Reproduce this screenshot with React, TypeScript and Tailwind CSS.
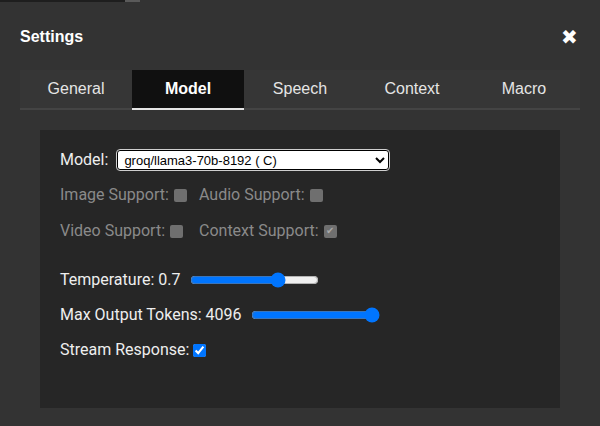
import { useState } from 'react'

const tabs = ['General', 'Model', 'Speech', 'Context', 'Macro']

export default function App() {
  const [active, setActive] = useState('Model')
  const [temp, setTemp] = useState(0.7)
  const [tokens, setTokens] = useState(4096)
  const [stream, setStream] = useState(true)

  return (
    <div className="h-[426px] w-[600px] overflow-hidden bg-[#333333] font-['Roboto',sans-serif] text-[#eeeeee]">
      {/* strip of the page behind the dialog */}
      <div className="flex h-[2px]">
        <div className="w-[125px] bg-[#1e1e1e]" />
        <div className="w-[15px] bg-[#5a5a5a]" />
      </div>

      <div className="px-5">
        {/* Header */}
        <div className="flex h-[69px] items-center justify-between">
          <h2 className="font-['Liberation_Sans',Arial,sans-serif] text-base font-bold text-white">Settings</h2>
          <button type="button" className="mr-[2px] text-[20px] leading-none text-white">
            ✖
          </button>
        </div>

        {/* Tabs */}
        <div className="-mt-px flex h-10 border-b-2 border-[#444444] bg-[#363636] font-['Liberation_Sans',Arial,sans-serif]">
          {tabs.map((t) => (
            <button
              key={t}
              type="button"
              onClick={() => setActive(t)}
              className={
                t === active
                  ? 'flex-1 -mb-[2px] border-b-2 border-[#e5e5e5] bg-[#101010] text-base font-bold text-white'
                  : 'flex-1 text-base text-[#e5e5e5]'
              }
            >
              {t}
            </button>
          ))}
        </div>

        {/* Model panel */}
        <div className="mx-5 mt-5 h-[278px] bg-[#262626] px-5 pt-5 text-base">
          <div className="flex h-5 items-center">
            <span className="mr-[9px]">Model:</span>
            <select
              defaultValue="groq"
              className="h-5 w-[272px] rounded-[3px] border border-black bg-white pl-[2px] font-['Liberation_Sans',Arial,sans-serif] text-[13px] text-black outline outline-1 outline-[#cfcfcf]"
            >
              <option value="groq">groq/llama3-70b-8192 ( C)</option>
            </select>
          </div>

          <div className="mt-[13px] grid grid-cols-[139px_auto] gap-y-3 text-[#8a8a8a]">
            <label className="flex h-6 items-center">
              Image Support:
              <input type="checkbox" disabled className="ml-[5px] h-[13px] w-[13px] appearance-none rounded-[2px] bg-[#6f6f6f]" />
            </label>
            <label className="flex h-6 items-center">
              Audio Support:
              <input type="checkbox" disabled className="ml-[5px] h-[13px] w-[13px] appearance-none rounded-[2px] bg-[#6f6f6f]" />
            </label>
            <label className="flex h-6 items-center">
              Video Support:
              <input type="checkbox" disabled className="ml-[5px] h-[13px] w-[13px] appearance-none rounded-[2px] bg-[#6f6f6f]" />
            </label>
            <label className="flex h-6 items-center">
              Context Support:
              <span className="ml-[5px] flex h-[13px] w-[13px] items-center justify-center rounded-[2px] bg-[#6f6f6f] text-[10px] leading-none text-[#a8a8a8]">
                ✔
              </span>
            </label>
          </div>

          <div className="mt-[25px] flex h-6 items-center">
            <span>Temperature: {temp}</span>
            <input
              type="range"
              min={0}
              max={1}
              step={0.1}
              value={temp}
              onChange={(e) => setTemp(Number(e.target.value))}
              className="ml-[10px]"
            />
          </div>

          <div className="mt-[11px] flex h-6 items-center">
            <span>Max Output Tokens: {tokens}</span>
            <input
              type="range"
              min={0}
              max={4096}
              value={tokens}
              onChange={(e) => setTokens(Number(e.target.value))}
              className="ml-[9px]"
            />
          </div>

          <div className="mt-[11px] flex h-6 items-center">
            <span>Stream Response:</span>
            <input
              type="checkbox"
              checked={stream}
              onChange={(e) => setStream(e.target.checked)}
              className="ml-1"
            />
          </div>
        </div>
      </div>
    </div>
  )
}
